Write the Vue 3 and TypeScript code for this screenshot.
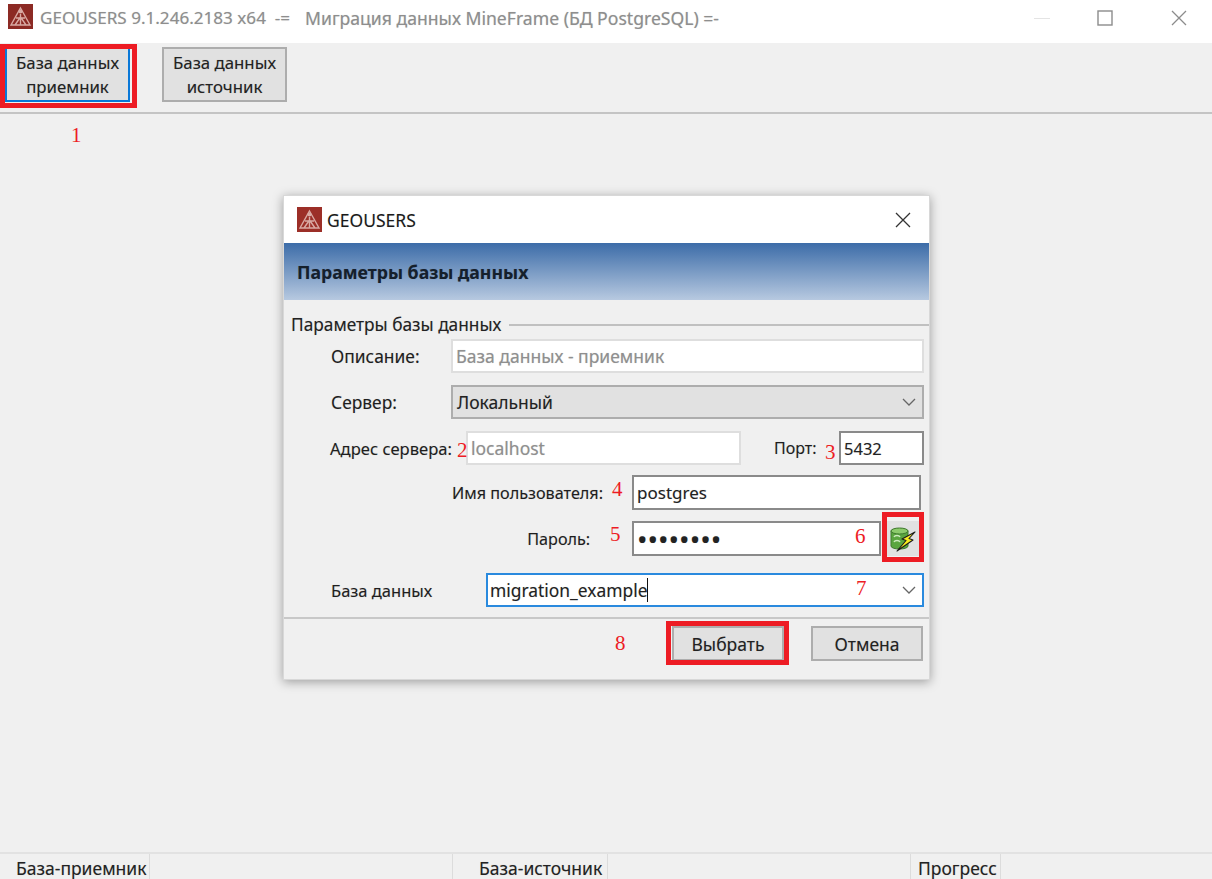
<script setup lang="ts">
const titleHead = 'GEOUSERS 9.1.246.2183 x64  -=  '
const titleTail = 'Миграция данных MineFrame (БД PostgreSQL) =-'
const statusCells = [
  { text: 'База-приемник', cls: 'c1' },
  { text: '', cls: 'c2' },
  { text: 'База-источник', cls: 'c3' },
  { text: '', cls: 'c4' },
  { text: 'Прогресс', cls: 'c5' },
  { text: '', cls: 'c6' },
]
const frames = [
  { id: 'f1', left: 0, top: 44, width: 137, height: 64 },
  { id: 'f6', left: 882, top: 512, width: 42, height: 50 },
  { id: 'f8', left: 666, top: 621, width: 123, height: 44 },
]
const marks = [
  { t: '1', x: 71, y: 123 },
  { t: '2', x: 457, y: 438 },
  { t: '3', x: 825, y: 440 },
  { t: '4', x: 612, y: 477 },
  { t: '5', x: 610, y: 522 },
  { t: '6', x: 855, y: 524 },
  { t: '7', x: 856, y: 576 },
  { t: '8', x: 615, y: 631 },
]
</script>

<template>
  <div class="win">
    <header class="titlebar">
      <svg class="logo" viewBox="0 0 25 25">
        <rect width="25" height="25" fill="#8c2a24" />
        <path d="M12.5 4 L22 21 H3 Z M12.5 10 V21 M8 14 H17 M7 21 L12.5 13 L18 21" fill="none" stroke="#d9aaa4" stroke-width="1.4" />
        <circle cx="12.5" cy="7.5" r="2" fill="#d9aaa4" />
      </svg>
      <span class="wintitle">{{ titleHead }}</span><span class="wintitle tail">{{ titleTail }}</span>
      <div class="controls">
        <svg width="16" height="16" viewBox="0 0 16 16" class="ctl-min"><path d="M0 8.5H16" stroke="#e4e4e4" /></svg>
        <svg width="16" height="16" viewBox="0 0 16 16" class="ctl-max"><rect x="1" y="1" width="14" height="14" fill="none" stroke="#8c8c8c" stroke-width="1.4" /></svg>
        <svg width="16" height="16" viewBox="0 0 16 16" class="ctl-close"><path d="M1 1L15 15M15 1L1 15" stroke="#8c8c8c" stroke-width="1.3" /></svg>
      </div>
    </header>

    <nav class="toolbar">
      <button class="tool active">База данных<br />приемник</button>
      <button class="tool">База данных<br />источник</button>
    </nav>

    <main class="workspace"></main>

    <footer class="status">
      <div v-for="c in statusCells" :key="c.cls" class="cell" :class="c.cls">{{ c.text }}</div>
    </footer>

    <section class="dialog">
      <div class="dlg-title">
        <svg class="logo" viewBox="0 0 25 25">
          <rect width="25" height="25" fill="#9c2f28" />
          <path d="M12.5 4 L22 21 H3 Z M12.5 10 V21 M8 14 H17 M7 21 L12.5 13 L18 21" fill="none" stroke="#d9aaa4" stroke-width="1.4" />
          <circle cx="12.5" cy="7.5" r="2" fill="#d9aaa4" />
        </svg>
        <span class="dlg-name">GEOUSERS</span>
        <svg class="dlg-x" width="16" height="16" viewBox="0 0 16 16"><path d="M1 1L15 15M15 1L1 15" stroke="#333" stroke-width="1.3" /></svg>
      </div>
      <div class="banner">Параметры базы данных</div>

      <div class="legend"><span>Параметры базы данных</span><i></i></div>

      <div class="row r1">
        <label class="lab lab-desc">Описание:</label>
        <input class="field grow disabled" value="База данных - приемник" readonly />
      </div>
      <div class="row r2">
        <label class="lab lab-desc">Сервер:</label>
        <div class="select grow">
          <span>Локальный</span>
          <svg width="14" height="8" viewBox="0 0 14 8"><path d="M1 1L7 7L13 1" fill="none" stroke="#666" stroke-width="1.3" /></svg>
        </div>
      </div>
      <div class="row r3">
        <label class="lab lab-addr">Адрес сервера:</label>
        <input class="field host disabled" value="localhost" readonly />
        <label class="lab lab-port">Порт:</label>
        <input class="field port" value="5432" readonly />
      </div>
      <div class="row r4">
        <label class="lab">Имя пользователя:</label>
        <input class="field user" value="postgres" readonly />
      </div>
      <div class="row r5">
        <label class="lab">Пароль:</label>
        <input class="field pass" type="password" value="postgres" readonly />
        <button class="dbbtn" aria-label="Проверить соединение">
          <svg width="28" height="26" viewBox="0 0 28 26">
            <path d="M2 5 C2 2 19 2 19 5 V20 C19 24 2 24 2 20 Z" fill="#5aa63f" stroke="#3f7a2e" />
            <ellipse cx="10.5" cy="5" rx="8.5" ry="3" fill="#8ccb6c" stroke="#3f7a2e" />
            <path d="M5 11 C6 9 10 9 11 11 M5 16 C6 14 10 14 11 16" stroke="#cdeabf" stroke-width="1.5" fill="none" />
            <path d="M26 6 L13 13 L17 14.500 L8 25 L24 14 L20 12.500 Z" fill="#f7ec1e" stroke="#1b1b1b" stroke-width="1.1" stroke-linejoin="round" />
          </svg>
        </button>
      </div>
      <div class="row r6">
        <label class="lab lab-db">База данных</label>
        <div class="combo grow">
          <span class="typed">migration_example</span>
          <svg width="14" height="8" viewBox="0 0 14 8"><path d="M1 1L7 7L13 1" fill="none" stroke="#666" stroke-width="1.3" /></svg>
        </div>
      </div>

      <div class="sep"></div>
      <div class="actions">
        <button class="act ok">Выбрать</button>
        <button class="act">Отмена</button>
      </div>
    </section>

    <div
      v-for="f in frames"
      :key="f.id"
      class="frame"
      :style="{ left: f.left + 'px', top: f.top + 'px', width: f.width + 'px', height: f.height + 'px' }"
    ></div>
    <span
      v-for="m in marks"
      :key="m.t"
      class="mark"
      :style="{ left: m.x + 'px', top: m.y + 'px' }"
    >{{ m.t }}</span>
  </div>
</template>

<style>
html, body { margin: 0; background: #f0f0f0; }
</style>

<style scoped>
.win {
  position: relative;
  width: 1212px;
  height: 879px;
  overflow: hidden;
  display: flex;
  flex-direction: column;
  background: #f0f0f0;
  font-family: "Noto Sans", "Open Sans", sans-serif;
  font-size: 17.5px;
  color: #222;
  text-shadow: 0 0 1px rgba(0, 0, 0, 0.2);
}
.titlebar {
  height: 43px;
  flex: none;
  background: #fff;
  display: flex;
  align-items: flex-start;
  padding-left: 8px;
  box-sizing: border-box;
}
.logo { width: 25px; height: 25px; flex: none; }
.titlebar .logo { margin-top: 4px; }
.wintitle {
  margin-left: 7px;
  line-height: 36px;
  color: #8e8e8e;
  white-space: pre;
  font-size: 17.1px;
}
.wintitle.tail { margin-left: 6px; font-size: 17.6px; }
.controls {
  margin-left: auto;
  display: flex;
  align-items: center;
  height: 36px;
}
.ctl-min { margin-right: 47px; }
.ctl-max { margin-right: 58px; }
.ctl-close { margin-right: 25px; }
.toolbar {
  height: 71px;
  flex: none;
  box-sizing: border-box;
  border-bottom: 2px solid #c4c4c4;
  display: flex;
  align-items: flex-start;
  gap: 32px;
  padding: 4px 0 0 5px;
}
.tool {
  width: 125px;
  height: 55px;
  box-sizing: border-box;
  background: #e1e1e1;
  border: 2px solid #adadad;
  font: inherit;
  font-size: 16.8px;
  color: #222;
  line-height: 24px;
  padding: 0;
  text-shadow: inherit;
}
.tool.active { border-color: #0a78d7; }
.workspace { flex: 1; }
.status {
  height: 27px;
  flex: none;
  border-top: 2px solid #e2e2e2;
  display: flex;
  box-sizing: border-box;
}
.cell {
  box-sizing: border-box;
  border-right: 1px solid #dcdcdc;
  white-space: nowrap;
  height: 25px;
  padding-top: 3px;
  line-height: 22px;
}
.c1 { width: 150px; padding-left: 16px; }
.c2 { width: 303px; }
.c3 { width: 155px; padding-left: 26px; }
.c4 { width: 303px; }
.c5 { width: 90px; padding-left: 7px; }
.c6 { flex: 1; border-right: 0; }

.dialog {
  position: absolute;
  left: 283px;
  top: 195px;
  width: 647px;
  height: 485px;
  background: #f0f0f0;
  box-sizing: border-box;
  border: 1px solid #d8d8d8;
  box-shadow: 0 2px 10px rgba(0, 0, 0, 0.35);
  display: flex;
  flex-direction: column;
}
.dlg-title {
  height: 47px;
  flex: none;
  background: #fff;
  display: flex;
  align-items: center;
  padding-left: 13px;
}
.dlg-name { margin-left: 5px; color: #1a1a1a; line-height: 44px; }
.dlg-x { margin-left: auto; margin-right: 18px; }
.banner {
  height: 57px;
  flex: none;
  box-sizing: border-box;
  padding-left: 13px;
  line-height: 58px;
  font-weight: 700;
  font-size: 17.7px;
  color: #15202c;
  background: linear-gradient(#3c6ca8, #b7c9e0);
}
.legend {
  height: 39px;
  flex: none;
  padding-top: 11px;
  box-sizing: border-box;
  padding-left: 7px;
  display: flex;
  align-items: center;
  gap: 8px;
  line-height: 28px;
  white-space: nowrap;
  font-size: 17.3px;
}
.legend i { flex: 1; height: 2px; background: #c0c0c0; }
.row {
  display: flex;
  align-items: center;
  height: 34px;
  flex: none;
  padding: 0 5px 0 47px;
  box-sizing: border-box;
}
.r2, .r3 { margin-top: 12px; }
.r4 { margin-top: 10px; height: 35px; padding: 0 8px 0 0; justify-content: flex-end; }
.r5 { margin-top: 11px; height: 35px; padding: 0 8px 0 0; justify-content: flex-end; }
.r6 { margin-top: 17px; }
.lab { white-space: nowrap; color: #1e1e1e; font-size: 16.2px; }
.lab-desc { width: 120px; flex: none; font-size: 17.4px; }
.lab-addr { width: 136px; flex: none; margin-left: -1px; font-size: 16.6px; }
.lab-port { width: 43px; flex: none; margin-left: 33px; margin-right: 22px; font-size: 16px; }
.lab-db { width: 155px; flex: none; font-size: 16.5px; }
.grow { flex: 1; min-width: 0; }
.field {
  height: 100%;
  box-sizing: border-box;
  border: 2px solid #8a8a8a;
  background: #fff;
  font: inherit;
  color: #222;
  padding: 0 3px;
  outline: none;
  margin: 0;
  text-shadow: inherit;
}
.field.disabled { border-color: #dedede; color: #8f8f8f; }
.host { width: 275px; flex: none; }
.port { width: 85px; flex: none; font-size: 16.5px; }
.user { width: 289px; flex: none; margin-left: 29px; font-size: 17px; }
.pass { width: 249px; flex: none; margin-left: 42px; margin-right: 4px; font-size: 28px; }
.dbbtn {
  width: 36px;
  height: 35px;
  flex: none;
  padding: 0;
  border: 0;
  background: #e1e1e1;
  display: flex;
  align-items: center;
  justify-content: center;
}
.select, .combo {
  height: 100%;
  box-sizing: border-box;
  display: flex;
  align-items: center;
  justify-content: space-between;
  padding: 0 6px 0 4px;
}
.select { background: #e1e1e1; border: 2px solid #adadad; }
.combo { background: #fff; border: 2px solid #2a8ade; padding-left: 2px; }
.typed { border-right: 1px solid #111; line-height: 24px; color: #222; font-size: 17.4px; }
.sep { height: 2px; flex: none; margin-top: 10px; background: #c8c8c8; }
.actions {
  flex: none;
  display: flex;
  justify-content: flex-end;
  gap: 27px;
  padding: 7px 6px 0 0;
}
.act {
  width: 112px;
  height: 35px;
  box-sizing: border-box;
  background: #e1e1e1;
  border: 2px solid #adadad;
  font: inherit;
  color: #222;
  padding: 0;
  text-shadow: inherit;
}
.frame {
  position: absolute;
  box-sizing: border-box;
  border: 5px solid #ed1c24;
  pointer-events: none;
}
.mark {
  position: absolute;
  font-family: "Liberation Serif", serif;
  font-size: 21px;
  line-height: 24px;
  color: #ed1c24;
  text-shadow: none;
}
</style>
